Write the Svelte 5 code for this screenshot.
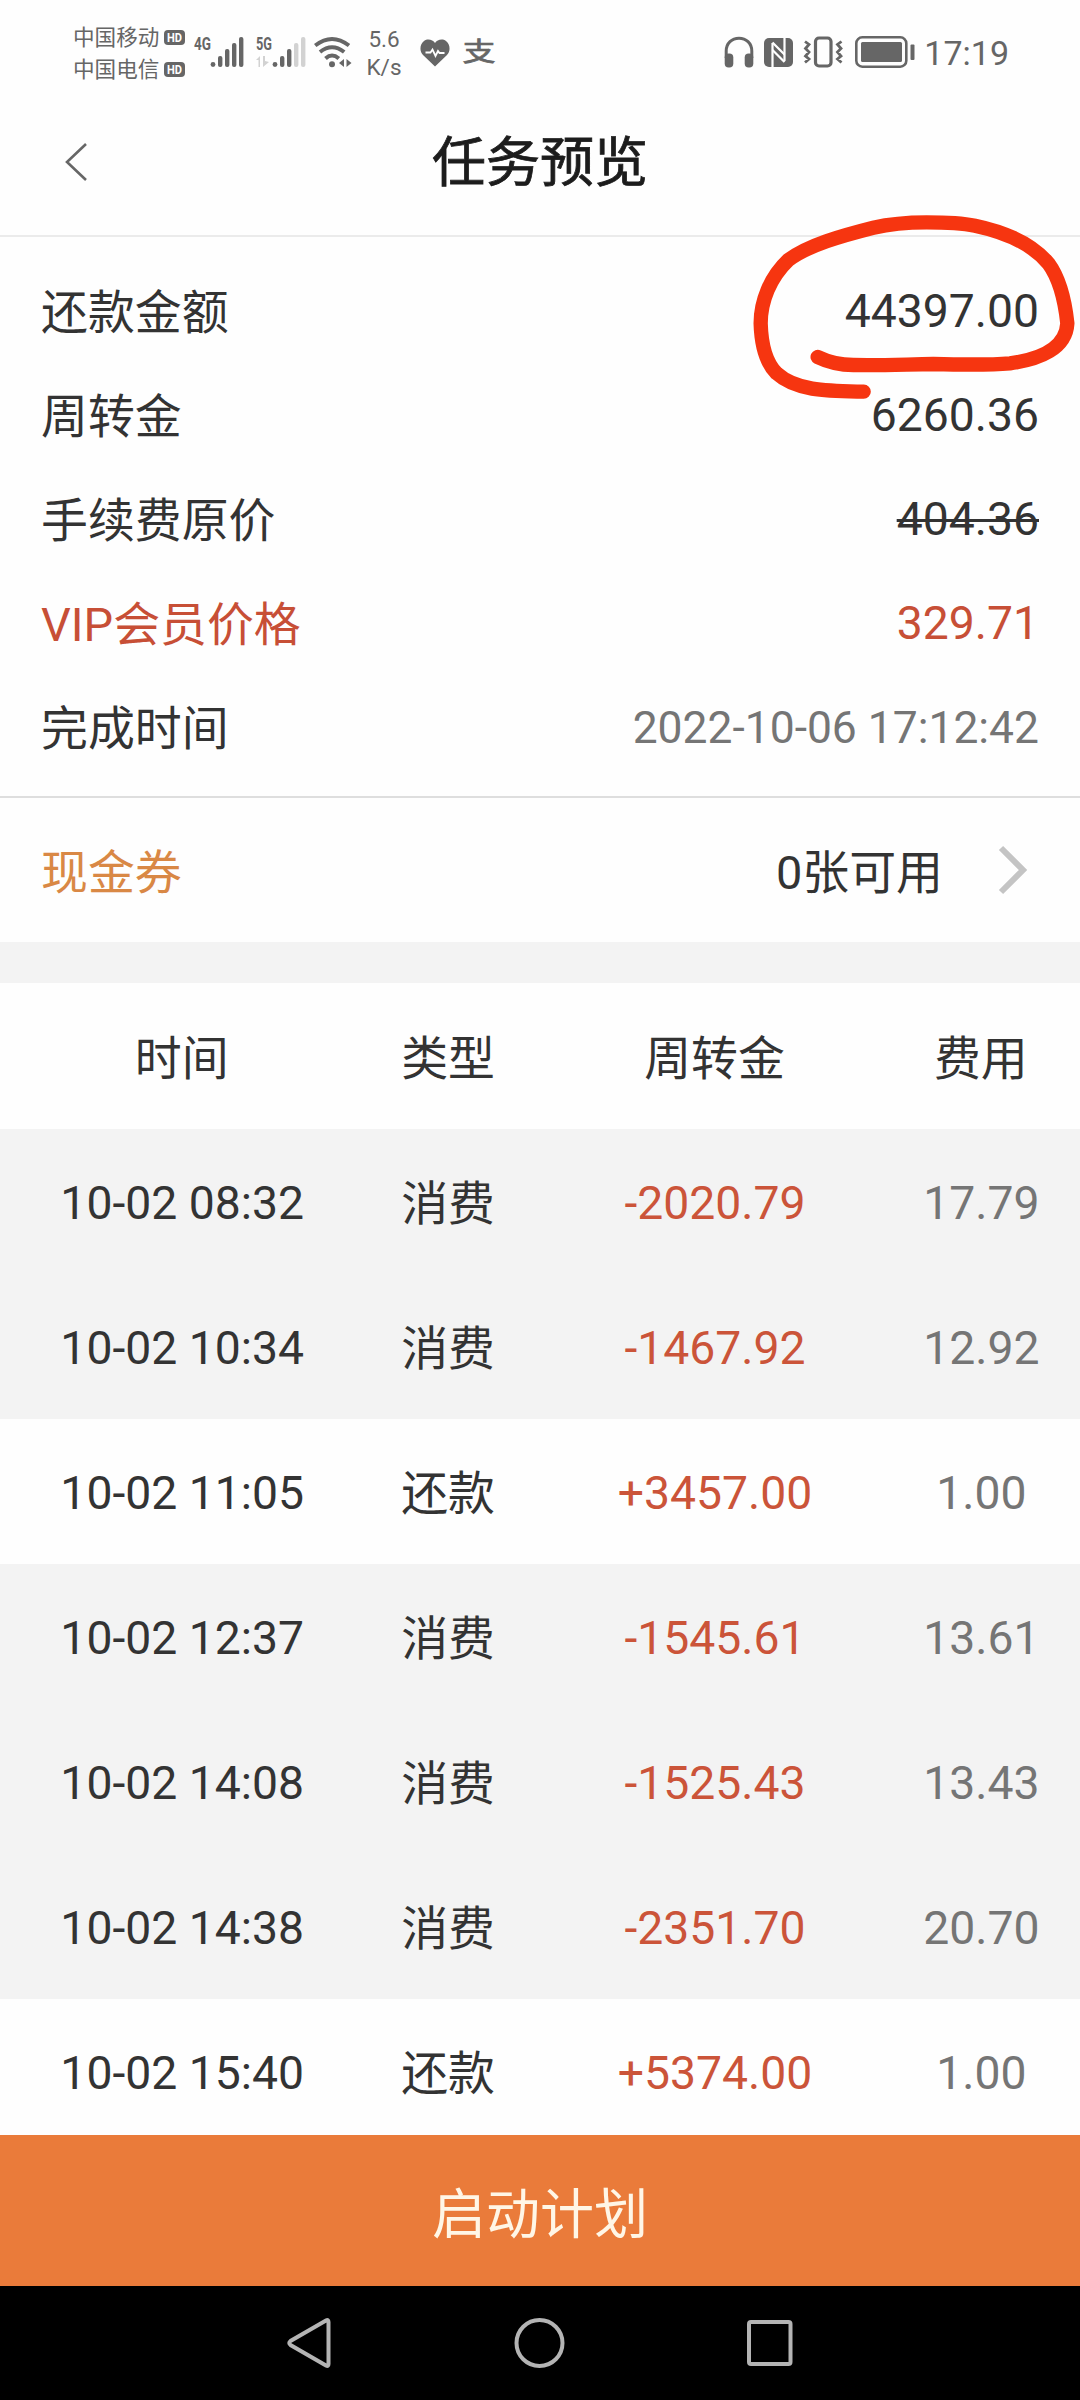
<script lang="ts">
  type Row = { time: string; kind: 'pay' | 'repay'; amount: string; fee: string };

  const carriers = ['中国移动', '中国电信'];

  const summary = [
    { label: '还款金额', value: '44397.00', cls: '' },
    { label: '周转金', value: '6260.36', cls: '' },
    { label: '手续费原价', value: '404.36', cls: 'old' },
    { label: 'VIP会员价格', value: '329.71', cls: 'vip' },
    { label: '完成时间', value: '2022-10-06 17:12:42', cls: 'date' }
  ];

  const columns = ['时间', '类型', '周转金', '费用'];

  const rows: Row[] = [
    { time: '10-02 08:32', kind: 'pay', amount: '-2020.79', fee: '17.79' },
    { time: '10-02 10:34', kind: 'pay', amount: '-1467.92', fee: '12.92' },
    { time: '10-02 11:05', kind: 'repay', amount: '+3457.00', fee: '1.00' },
    { time: '10-02 12:37', kind: 'pay', amount: '-1545.61', fee: '13.61' },
    { time: '10-02 14:08', kind: 'pay', amount: '-1525.43', fee: '13.43' },
    { time: '10-02 14:38', kind: 'pay', amount: '-2351.70', fee: '20.70' },
    { time: '10-02 15:40', kind: 'repay', amount: '+5374.00', fee: '1.00' }
  ];

  const kinds = { pay: '消费', repay: '还款' };
</script>

<div class="screen" lang="zh-CN">
  <div class="status">
    <div class="carriers">
      {#each carriers as name}
        <div class="carrier">
          <span>{name}</span>
          <svg width="21" height="15" viewBox="0 0 21 15">
            <rect width="21" height="15" rx="4" fill="#666" />
            <text x="3" y="12.2" font-size="13" font-weight="700" fill="#fff" textLength="15" lengthAdjust="spacingAndGlyphs">HD</text>
          </svg>
        </div>
      {/each}
    </div>

    <div class="signal">
      <svg width="52" height="38" viewBox="0 -4 52 38" fill="#666">
        <text x="1" y="15" font-size="18.5" font-weight="700" textLength="17" lengthAdjust="spacingAndGlyphs">4G</text>
        <circle cx="20" cy="29.5" r="2.4" />
        <rect x="25" y="21" width="4.4" height="11" rx="2" />
        <rect x="32" y="14" width="4.4" height="18" rx="2" />
        <rect x="39" y="8" width="4.4" height="24" rx="2" />
        <rect x="46" y="2" width="4.4" height="30" rx="2" />
      </svg>
      <svg width="52" height="38" viewBox="0 -4 52 38" fill="#666">
        <text x="1" y="15" font-size="18.5" font-weight="700" textLength="16" lengthAdjust="spacingAndGlyphs">5G</text>
        <g fill="#d2d2d2">
          <path d="M1 25l4-4v11H3.500v-7zM8 21v11l6-5-4-1v-5z" />
          <rect x="39" y="8" width="4.4" height="24" rx="2" />
          <rect x="46" y="2" width="4.4" height="30" rx="2" />
        </g>
        <circle cx="20" cy="29.5" r="2.4" />
        <rect x="25" y="21" width="4.4" height="11" rx="2" />
        <rect x="32" y="14" width="4.4" height="18" rx="2" />
      </svg>
    </div>

    <svg class="wifi" width="39" height="34" viewBox="0 0 39 34">
      <g fill="none" stroke="#666" stroke-width="4">
        <path d="M1.200 10.500Q18 -2.600 35 10.500" />
        <path d="M6 17Q18 7.600 30.200 17" />
        <path d="M11.500 23.400Q18 17.600 24.800 23.400" />
      </g>
      <circle cx="18" cy="29.300" r="3" fill="#666" />
      <path d="M30 24v8l-5-4zM32.500 24v8l5-4z" fill="#666" />
    </svg>

    <div class="speed"><span>5.6</span><span>K/s</span></div>

    <svg class="heart" width="30" height="28" viewBox="0 0 30 28">
      <path d="M15 27.500L3 16C-1 11.500 0 5 4 2C8 -1 13 1 15 4C17 1 22 -1 26 2C30 5 31 11.500 27 16Z" fill="#666" />
      <path d="M5.500 13.500h5l2-3 3 6.500 2.500-5 1.500 2h5" fill="none" stroke="#fff" stroke-width="1.800" />
    </svg>
    <span class="zhi">支</span>

    <div class="right">
      <svg width="30" height="32" viewBox="0 0 30 32">
        <path d="M2.200 22V15C2.200 7 8 2.200 15 2.200S27.800 7 27.800 15v7" fill="none" stroke="#666" stroke-width="3" />
        <rect x=".7" y="17.500" width="8.600" height="14" rx="4" fill="#666" />
        <rect x="20.700" y="17.500" width="8.600" height="14" rx="4" fill="#666" />
      </svg>
      <svg class="nfc" width="29" height="29" viewBox="0 0 29 29">
        <rect width="29" height="29" rx="5" fill="#666" />
        <path d="M8.500 29V5M20.500 0V23" fill="none" stroke="#fff" stroke-width="2.200" />
        <path d="M8.500 4.500L20.500 16.500M8.500 12L20.500 24" fill="none" stroke="#fff" stroke-width="2.200" />
      </svg>
      <svg class="vibrate" width="40" height="32" viewBox="0 0 40 32">
        <rect x="12.500" y="2" width="15.500" height="28" rx="3.500" fill="none" stroke="#666" stroke-width="3.200" />
        <path d="M2 5.500l4 3-3.500 4 3.500 3.500-3.500 4 3.500 3-4 3.500M38.500 5.500l-4 3 3.500 4-3.500 3.500 3.500 4-3.500 3 4 3.500" fill="none" stroke="#666" stroke-width="2.800" />
      </svg>
      <svg class="battery" width="60" height="32" viewBox="0 0 60 32">
        <rect x="1.300" y="1.300" width="50" height="29.400" rx="6" fill="none" stroke="#666" stroke-width="2.600" />
        <rect x="6" y="6" width="41" height="20" rx="1.500" fill="#666" />
        <rect x="55.500" y="8.500" width="4" height="15.500" rx="1" fill="#666" />
      </svg>
      <span class="clock">17:19</span>
    </div>
  </div>

  <header>
    <svg width="24" height="40" viewBox="0 0 24 40">
      <path d="M22 1L3 19L22 37" fill="none" stroke="#666" stroke-width="2.600" />
    </svg>
    <h1>任务预览</h1>
  </header>

  <section class="summary">
    {#each summary as item}
      <div class="line {item.cls}">
        <span class="zh">{item.label}</span>
        <span class="value">{item.value}</span>
      </div>
    {/each}
    <!-- hand-drawn mark round the repayment amount -->
    <svg class="mark" width="360" height="270" viewBox="0 0 1080 810">
      <path d="M293 501C330 519 360 525 400 525C480 527 560 523 640 522C720 524 800 526 870 520C960 508 1038 475 1042 400C1035 335 1022 270 985 220C935 160 850 125 765 107C720 98 670 97 620 97C570 97 520 99 460 113C365 137 265 165 205 210C150 262 122 335 122 400C124 470 140 520 170 550C230 605 330 603 431 605" />
    </svg>
  </section>

  <section class="coupon">
    <span class="zh">现金券</span>
    <div class="count">
      <span class="zh">0张可用</span>
      <svg width="32" height="52" viewBox="0 0 32 52">
        <path d="M4 4L26 26L4 48" fill="none" stroke="#c4c4c4" stroke-width="6" />
      </svg>
    </div>
  </section>

  <section class="table">
    <div class="row">
      {#each columns as col}
        <span class="zh">{col}</span>
      {/each}
    </div>
    {#each rows as r}
      <div class="row {r.kind}">
        <span>{r.time}</span>
        <span class="zh">{kinds[r.kind]}</span>
        <span class="amount">{r.amount}</span>
        <span class="fee">{r.fee}</span>
      </div>
    {/each}
  </section>

  <button>启动计划</button>

  <nav>
    <svg width="44" height="52" viewBox="0 0 44 52">
      <path d="M39 3.500Q41.500 2 41.500 5V47Q41.500 50 39 48.500L3.500 28Q1 26 3.500 24Z" />
    </svg>
    <svg width="52" height="52" viewBox="0 0 52 52">
      <circle cx="26.500" cy="26" r="23" />
    </svg>
    <svg width="46" height="46" viewBox="0 0 46 46">
      <rect x="2" y="2" width="41.500" height="42" rx="2" />
    </svg>
  </nav>
</div>

<style>
	:global(body) {
		margin: 0;
		background: #fefefe;
	}

	.screen {
		width: 1080px;
		height: 2400px;
		display: flex;
		flex-direction: column;
		overflow: hidden;
		background: #fefefe;
		color: #333;
		font-family: Roboto, 'Noto Sans CJK SC', sans-serif;
		font-size: 46.3px;
		line-height: 60px;
	}

	svg {
		display: block;
		flex: none;
	}

	.zh {
		font-size: 46.9px;
		padding-top: 3px;
	}

	.status {
		height: 90px;
		box-sizing: border-box;
		padding: 0 71px 0 73px;
		display: flex;
		align-items: flex-start;
		color: #666;
	}

	.carriers {
		padding-top: 22px;
		width: 120px;
	}

	.carrier {
		display: flex;
		align-items: center;
		gap: 5px;
		height: 31.5px;
		font-size: 21.6px;
		line-height: 31.5px;
		white-space: nowrap;
	}

	.signal {
		display: flex;
		gap: 10px;
		margin-top: 31px;
	}

	.wifi {
		margin: 35px 0 0 7px;
	}

	.speed {
		display: flex;
		flex-direction: column;
		align-items: center;
		width: 40px;
		margin: 26px 0 0 11px;
		font-size: 22.5px;
		line-height: 27.5px;
	}

	.heart {
		margin: 39px 0 0 16px;
	}

	.zhi {
		margin: 37px 0 0 14px;
		font-size: 30px;
		line-height: 30px;
		-webkit-text-stroke: 0.8px #666;
		transform: scale(1.1, 0.88);
	}

	.right {
		margin: 36px 0 0 auto;
		display: flex;
		align-items: center;
		height: 32px;
	}

	.nfc {
		margin-left: 10px;
	}

	.vibrate {
		margin-left: 10px;
	}

	.battery {
		margin: 0 9px 0 12px;
	}

	.clock {
		font-size: 34px;
		line-height: 34px;
		padding-top: 2px;
	}

	header {
		height: 147px;
		box-sizing: border-box;
		border-bottom: 2px solid #ebebeb;
		padding: 0 64px;
		display: grid;
		grid-template-columns: 24px 1fr 24px;
		align-items: center;
	}

	h1 {
		margin: 0;
		padding-top: 3px;
		text-align: center;
		font-size: 54px;
		font-weight: 400;
		color: #1c1c1c;
		-webkit-text-stroke: 0.8px #1c1c1c;
	}

	.summary {
		position: relative;
		padding: 22px 41px 17px;
		border-bottom: 2px solid #dedede;
	}

	.line {
		height: 104px;
		display: flex;
		align-items: center;
		justify-content: space-between;
	}

	.old .value {
		text-decoration: line-through;
		text-decoration-thickness: 3px;
	}

	.vip {
		color: #c74f36;
	}

	.date .value {
		padding-top: 2px;
		font-size: 44.4px;
		color: #757575;
	}

	.mark {
		position: absolute;
		top: -47px;
		right: 0;
	}

	.mark path {
		fill: none;
		stroke: #f63510;
		stroke-width: 43;
		stroke-linecap: round;
		stroke-linejoin: round;
	}

	.coupon {
		height: 144px;
		padding: 0 51px 0 41px;
		display: flex;
		align-items: center;
		justify-content: space-between;
		color: #d98845;
		border-bottom: 41px solid #f3f3f3;
	}

	.coupon .zh {
		padding-top: 5px;
	}

	.count {
		display: flex;
		align-items: center;
		gap: 54px;
		color: #333;
	}

	.table {
		height: 1152px;
		overflow: hidden;
	}

	.row {
		height: 145px;
		box-sizing: border-box;
		padding: 2px 0 0 49px;
		display: grid;
		grid-template-columns: repeat(4, 266.4px);
		align-items: center;
		text-align: center;
	}

	.row:first-child {
		height: 146px;
		padding-top: 4px;
	}

	.row .zh {
		padding: 2px 1px 0 0;
	}

	.pay {
		background: #f3f3f3;
	}

	.amount {
		color: #cb5439;
	}

	.fee {
		color: #757575;
	}

	button {
		height: 151px;
		border: none;
		padding: 0;
		background: #ea7b3a;
		color: #fff6e6;
		font-family: inherit;
		font-size: 54px;
	}

	nav {
		flex: 1;
		display: flex;
		justify-content: center;
		align-items: center;
		gap: 182px;
		background: #000;
	}

	nav svg {
		fill: none;
		stroke: #b4b4b4;
		stroke-width: 4;
	}
</style>
